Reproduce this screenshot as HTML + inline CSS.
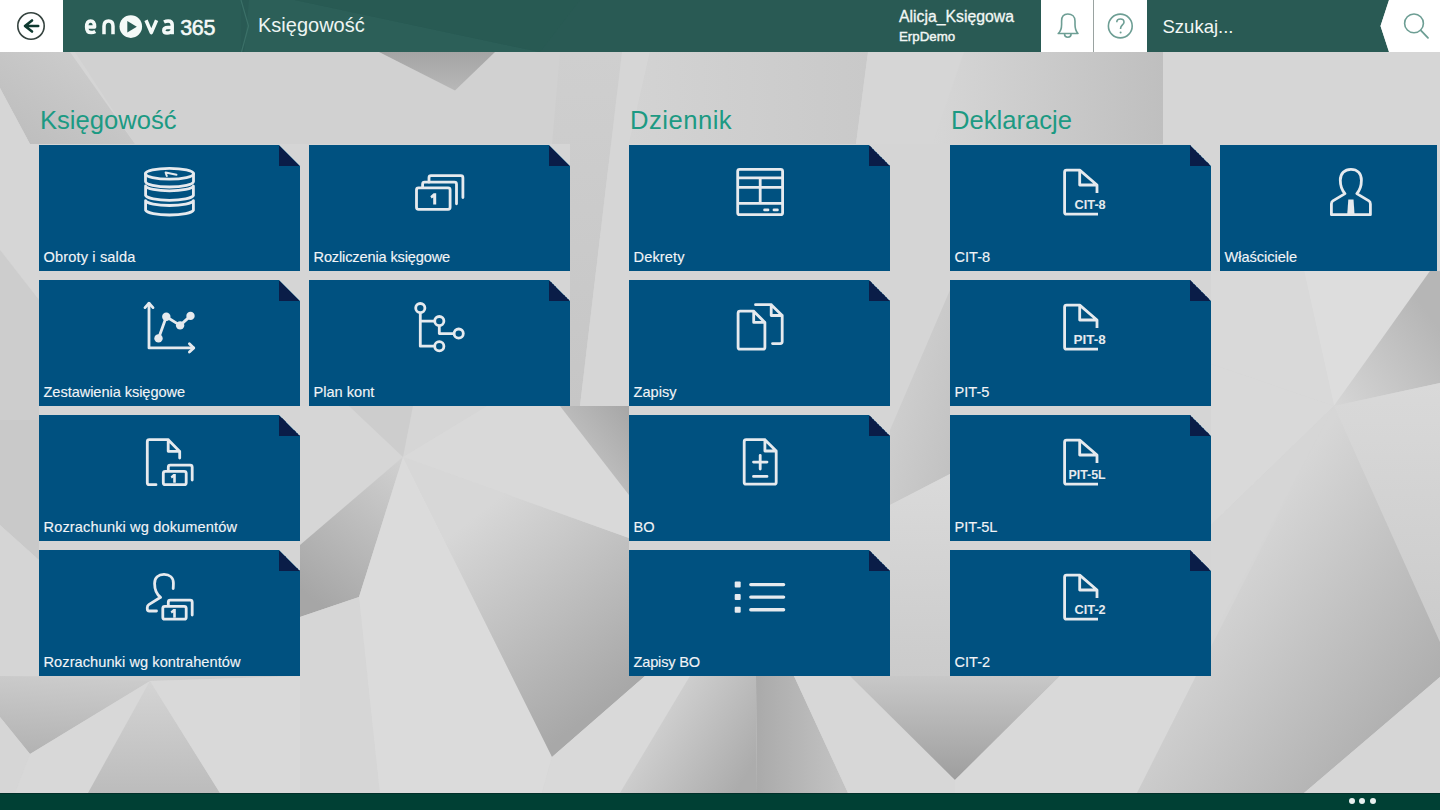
<!DOCTYPE html>
<html><head><meta charset="utf-8">
<style>
*{margin:0;padding:0;box-sizing:border-box}
html,body{width:1440px;height:810px;overflow:hidden}
body{position:relative;background:#d4d4d4;font-family:"Liberation Sans",sans-serif}
#bg{position:absolute;left:0;top:0;width:1440px;height:810px}
#hdr{position:absolute;left:0;top:0;width:1440px;height:52px}
.t{position:absolute;width:261px;height:126px;background:#005180;overflow:hidden;clip-path:polygon(0 0,calc(100% - 21px) 0,100% 21px,100% 100%,0 100%)}
.t.nf{clip-path:none}
.t:after{content:"";position:absolute;right:0;top:0;width:21px;height:21px;
 background:linear-gradient(45deg,#0a1d48 50%,transparent 50%)}
.t.nf:after{display:none}
.t .l{position:absolute;left:4.5px;top:104.3px;font-size:14.6px;color:#f2f4f7;white-space:nowrap;-webkit-text-stroke:0.12px #f2f4f7}
.t svg{position:absolute;left:0;top:0}
.h{position:absolute;top:105.5px;font-size:25.6px;color:#1c9a83;white-space:nowrap}
#ftr{position:absolute;left:0;top:793px;width:1440px;height:17px;background:#004034;border-top:1px solid #01302a}
.dot{position:absolute;top:798px;width:6px;height:6px;border-radius:50%;background:#e8f0ee}
</style></head><body>
<svg id="bg" width="1440" height="810" viewBox="0 0 1440 810">
<defs>
<linearGradient id="gT1" x1="0" y1="0" x2="0" y2="1"><stop offset="0" stop-color="#a4a4a4"/><stop offset="1" stop-color="#b8b8b8"/></linearGradient>
<linearGradient id="gTL" x1="0" y1="1" x2="1" y2="0"><stop offset="0" stop-color="#bcbcbc"/><stop offset="1" stop-color="#d0d0d0"/></linearGradient>
<linearGradient id="gK2" x1="0" y1="0" x2="1" y2="0"><stop offset="0" stop-color="#d6d6d6"/><stop offset="1" stop-color="#bfbfbf"/></linearGradient>
<linearGradient id="gA" gradientUnits="userSpaceOnUse" x1="400" y1="460" x2="300" y2="590"><stop offset="0" stop-color="#d0d0d0"/><stop offset="1" stop-color="#a6a6a6"/></linearGradient>
<linearGradient id="gB" gradientUnits="userSpaceOnUse" x1="470" y1="520" x2="610" y2="700"><stop offset="0" stop-color="#d7d7d7"/><stop offset="1" stop-color="#a8a8a8"/></linearGradient>
<linearGradient id="gD" x1="0" y1="1" x2="1" y2="0"><stop offset="0" stop-color="#d0d0d0"/><stop offset="1" stop-color="#a6a6a6"/></linearGradient>
<linearGradient id="gF1" x1="0.2" y1="0" x2="0.1" y2="1"><stop offset="0" stop-color="#cbcbcb"/><stop offset="1" stop-color="#b2b2b2"/></linearGradient>
<linearGradient id="gF4" x1="0" y1="0" x2="0" y2="1"><stop offset="0" stop-color="#d4d4d4"/><stop offset="1" stop-color="#bcbcbc"/></linearGradient>
<linearGradient id="gTri" x1="0" y1="0" x2="0" y2="1"><stop offset="0" stop-color="#c8c8c8"/><stop offset="1" stop-color="#9e9e9e"/></linearGradient>
<linearGradient id="gM1" gradientUnits="userSpaceOnUse" x1="660" y1="700" x2="756" y2="760"><stop offset="0" stop-color="#d2d2d2"/><stop offset="1" stop-color="#acacac"/></linearGradient>
<linearGradient id="gM2" gradientUnits="userSpaceOnUse" x1="756" y1="740" x2="840" y2="740"><stop offset="0" stop-color="#aaaaaa"/><stop offset="1" stop-color="#c2c2c2"/></linearGradient>
<linearGradient id="gR3" gradientUnits="userSpaceOnUse" x1="1334" y1="406" x2="1440" y2="330"><stop offset="0" stop-color="#d6d6d6"/><stop offset="1" stop-color="#b6b6b6"/></linearGradient>
<linearGradient id="gR7" gradientUnits="userSpaceOnUse" x1="1230" y1="560" x2="1420" y2="700"><stop offset="0" stop-color="#d6d6d6"/><stop offset="1" stop-color="#afafaf"/></linearGradient>
<linearGradient id="gR4" x1="0" y1="0" x2="0" y2="1"><stop offset="0" stop-color="#d9d9d9"/><stop offset="1" stop-color="#cbcbcb"/></linearGradient>
<linearGradient id="gG" x1="0" y1="0" x2="1" y2="1"><stop offset="0" stop-color="#d5d5d5"/><stop offset="1" stop-color="#b8b8b8"/></linearGradient>
<linearGradient id="gK" x1="0" y1="0" x2="1" y2="0"><stop offset="0" stop-color="#d2d2d2"/><stop offset="1" stop-color="#c2c2c2"/></linearGradient>
<linearGradient id="gGap" x1="0" y1="0" x2="0" y2="1"><stop offset="0" stop-color="#cfcfcf"/><stop offset="1" stop-color="#c6c6c6"/></linearGradient>
<linearGradient id="gTop2" x1="0" y1="0" x2="1" y2="0"><stop offset="0" stop-color="#d3d3d3"/><stop offset="1" stop-color="#c9c9c9"/></linearGradient>
<linearGradient id="gWedge" x1="0" y1="0" x2="1" y2="1"><stop offset="0" stop-color="#d4d4d4"/><stop offset="1" stop-color="#c0c0c0"/></linearGradient>
<linearGradient id="gGap2" x1="0" y1="0" x2="0" y2="1"><stop offset="0" stop-color="#dadada"/><stop offset="1" stop-color="#cbcbcb"/></linearGradient>
</defs>
<rect x="0" y="0" width="1440" height="810" fill="#d5d5d5"/>
<!-- top band -->
<polygon points="75,52 378,52 455,90 487,52 700,52 690,144 135,144" fill="#d1d1d1"/>
<polygon points="0,52 70,52 135,144 30,144 0,88" fill="url(#gTL)"/>
<polygon points="0,88 30,144 0,144" fill="#d6d6d6"/>
<polygon points="379,52 495,52 455,90.5" fill="url(#gT1)"/>
<polygon points="560,52 622,52 580,406 570,406 570,144 552,144" fill="url(#gGap)"/>
<polygon points="622,52 650,52 629,144 629,406 580,406" fill="#d6d6d6"/>
<polygon points="650,52 868,52 856,144 629,144" fill="url(#gTop2)"/>
<polygon points="868,52 964,52 933,144 856,144" fill="#d6d6d6"/>
<polygon points="964,52 1163,52 1163,144 933,144" fill="url(#gK2)"/>
<polygon points="1163,52 1440,52 1440,271 1163,271" fill="#d6d6d6"/>
<!-- left strip -->
<polygon points="0,144 39,144 39,300 0,250" fill="#d6d6d6"/>
<polygon points="0,250 39,300 39,420 0,420" fill="#cdcdcd"/>
<polygon points="0,420 39,420 39,560 0,525" fill="#c9c9c9"/>
<polygon points="0,525 39,560 39,676 0,676" fill="#d5d5d5"/>
<!-- bottom left -->
<polygon points="0,676 300,676 150,681 30,754 0,717" fill="#cdcdcd"/>
<polygon points="0,676 150,681 30,754 0,717" fill="url(#gF1)"/>
<polygon points="0,717 30,754 15,793 0,793" fill="#d6d6d6"/>
<polygon points="30,754 150,681 88,793 15,793" fill="#d8d8d8"/>
<polygon points="150,681 88,793 220,793" fill="url(#gF4)"/>
<polygon points="150,681 300,676 380,676 380,793 220,793" fill="#d9d9d9"/>
<!-- middle-left region with vertex V3 -->
<polygon points="300,406 487,406 403,457 300,545" fill="#d6d6d6"/>
<polygon points="349,406 413,406 403,457" fill="#cdcdcd"/>
<polygon points="403,457 300,545 300,617 359,597" fill="url(#gA)"/>
<polygon points="300,617 359,597 380,793 300,793" fill="#d6d6d6"/>
<polygon points="403,457 359,597 380,793 542,793 552,757" fill="#dbdbdb"/>
<polygon points="403,457 629,538 629,676 645,676 552,757" fill="url(#gB)"/>
<polygon points="403,457 487,406 560,406 629,495 629,538" fill="#d9d9d9"/>
<polygon points="560,406 629,406 629,495" fill="url(#gD)"/>
<!-- bottom middle -->
<polygon points="645,676 690,676 620,793 542,793 552,757" fill="#d9d9d9"/>
<polygon points="690,676 756,676 757,793 620,793" fill="url(#gM1)"/>
<polygon points="756,676 794,676 848,793 757,793" fill="url(#gM2)"/>
<polygon points="794,676 850,676 955,780 955,793 848,793" fill="#d7d7d7"/>
<polygon points="850,676 1060,676 955,780" fill="url(#gTri)"/>
<polygon points="1060,676 1196,676 1137,793 955,793 955,780" fill="#d9d9d9"/>
<!-- gap between Dziennik and Deklaracje -->
<polygon points="890,430 950,290 950,474 890,505" fill="url(#gWedge)"/>
<polygon points="890,505 950,474 950,676 890,676" fill="url(#gGap2)"/>
<!-- right column V2 -->
<polygon points="1211,271 1304,271 1334,406 1211,364" fill="#d9d9d9"/>
<polygon points="1304,271 1430,271 1334,406" fill="#dddddd"/>
<polygon points="1430,271 1440,271 1440,383 1334,406" fill="url(#gR3)"/>
<polygon points="1334,406 1440,383 1440,642" fill="url(#gR4)"/>
<polygon points="1334,406 1211,364 1211,525" fill="#d9d9d9"/>
<polygon points="1334,406 1211,525 1211,639" fill="#d6d6d6"/>
<polygon points="1334,406 1196,676 1137,793 1304,793 1440,677 1440,642" fill="url(#gR7)"/>
<polygon points="1304,793 1440,677 1440,793" fill="#d6d6d6"/>
</svg>

<div id="hdr">
<svg width="1440" height="52" viewBox="0 0 1440 52" style="position:absolute;left:0;top:0">
<rect x="0" y="0" width="63" height="52" fill="#ffffff"/>
<rect x="63" y="0" width="978" height="52" fill="#295a54"/>
<polygon points="63,0 241,0 241,52 63,52" fill="#2a5d56"/>
<polygon points="249,0 295,0 540,52 244,52" fill="#2c5f58"/>
<polygon points="295,0 580,0 540,52" fill="#285a53"/>
<polyline points="241,0 248.5,26 241.5,52" fill="none" stroke="#3b7068" stroke-width="1.2"/>
<rect x="1041" y="0" width="106" height="52" fill="#ffffff"/>
<rect x="1093" y="0" width="1" height="52" fill="#9aa3a1"/>
<polygon points="1147,0 1389,0 1380.5,26 1389,52 1147,52" fill="#295a54"/>
<rect x="1389" y="0" width="51" height="52" fill="#ffffff"/>
<polygon points="1389,0 1440,0 1440,52 1389,52 1380.5,26" fill="#ffffff"/>
<!-- back icon -->
<circle cx="31" cy="26" r="13.2" fill="none" stroke="#34423e" stroke-width="1.6"/>
<path d="M38.2 26 H25.5 M32 20.5 L25 26 L32 31.5" fill="none" stroke="#0e3a30" stroke-width="2.6" stroke-linecap="round" stroke-linejoin="round"/>
<!-- logo -->
<g fill="none" stroke="#f4faf8" stroke-width="3.5" stroke-linecap="butt" stroke-linejoin="round">
<path d="M87 26.9 H94.6 C94.6 23 92.9 20.9 90.6 20.9 C88 20.9 86.6 23.4 86.6 27 C86.6 30.6 88.3 32.6 91.2 32.6 C92.8 32.6 94 32.2 95.3 31.4"/>
<path d="M104 34.3 V26.2 C104 22.8 105.9 20.9 108.6 20.9 C111.3 20.9 113 22.8 113 26.2 V34.3"/>
<path d="M146 20.2 L151.3 32.6 L156.6 20.2"/>
<path d="M164 22 C165.3 21.3 166.6 20.9 168.2 20.9 C170.8 20.9 172.2 22.2 172.2 24.8 V34.3 M172.2 27.6 H167.9 C165.2 27.6 163.8 28.8 163.8 30.5 C163.8 32.2 165.1 33 167 33 C169.4 33 172.2 31.7 172.2 29.5"/>
</g>
<circle cx="130.8" cy="26.6" r="11.3" fill="#f4faf8"/>
<path d="M127.3 21 L136.8 26.8 L127.3 32.6 Z" fill="#2a5d56"/>
<text x="180.3" y="34.6" font-family="Liberation Sans" font-size="21.5" fill="#f4faf8" stroke="#f4faf8" stroke-width="0.55" letter-spacing="-0.4">365</text>
<!-- title -->
<text x="258" y="32.3" font-family="Liberation Sans" font-size="20" fill="#eef5f3">Księgowość</text>
<text x="899" y="21.5" font-family="Liberation Sans" font-size="15.8" fill="#f2f7f5" stroke="#f2f7f5" stroke-width="0.3">Alicja_Księgowa</text>
<text x="899" y="40.8" font-family="Liberation Sans" font-size="13.3" fill="#f2f7f5" stroke="#f2f7f5" stroke-width="0.4">ErpDemo</text>
<text x="1162.5" y="32.9" font-family="Liberation Sans" font-size="18.5" fill="#f2f7f5">Szukaj...</text>
<!-- bell -->
<path d="M1058.2 33.5 H1078 C1076 31.5 1075 29 1075 24.5 V21 C1075 16.8 1072 14 1067.8 14 C1063.6 14 1061.6 16.8 1061.6 21 V24.5 C1061.6 29 1060.6 31.5 1058.2 33.5 Z M1064.5 34 A3.3 3.3 0 0 0 1071.1 34" fill="none" stroke="#6d9e94" stroke-width="1.6" stroke-linejoin="round"/>
<!-- help -->
<circle cx="1120.3" cy="26" r="11.9" fill="none" stroke="#6d9e94" stroke-width="1.6"/>
<path d="M1116.8 22.2 C1116.8 20.2 1118.4 19 1120.4 19 C1122.5 19 1124 20.3 1124 22.2 C1124 24.6 1120.6 25.3 1120.6 28.2 V29" fill="none" stroke="#6d9e94" stroke-width="1.6"/>
<circle cx="1120.6" cy="32.4" r="1" fill="#6d9e94"/>
<!-- search -->
<circle cx="1414" cy="23.4" r="9.4" fill="none" stroke="#6d9e94" stroke-width="1.6"/>
<path d="M1420.8 30.4 L1428 37.8" fill="none" stroke="#6d9e94" stroke-width="1.8" stroke-linecap="round"/>
</svg>
</div>

<div class="h" style="left:40px">Księgowość</div>
<div class="h" style="left:630px;letter-spacing:0.5px">Dziennik</div>
<div class="h" style="left:951px">Deklaracje</div>

<div class="t" style="left:39px;top:145px"><div class="l" style="letter-spacing:0.14px">Obroty i salda</div></div>
<div class="t" style="left:309px;top:145px"><div class="l" style="letter-spacing:-0.15px">Rozliczenia księgowe</div></div>
<div class="t" style="left:39px;top:280px"><div class="l" style="letter-spacing:-0.06px">Zestawienia księgowe</div></div>
<div class="t" style="left:309px;top:280px"><div class="l">Plan kont</div></div>
<div class="t" style="left:39px;top:415px"><div class="l" style="letter-spacing:0.12px">Rozrachunki wg dokumentów</div></div>
<div class="t" style="left:39px;top:550px"><div class="l" style="letter-spacing:0.06px">Rozrachunki wg kontrahentów</div></div>

<div class="t" style="left:629px;top:145px"><div class="l" style="letter-spacing:0.13px">Dekrety</div></div>
<div class="t" style="left:629px;top:280px"><div class="l">Zapisy</div></div>
<div class="t" style="left:629px;top:415px"><div class="l">BO</div></div>
<div class="t" style="left:629px;top:550px"><div class="l" style="letter-spacing:-0.18px">Zapisy BO</div></div>

<div class="t" style="left:950px;top:145px"><div class="l">CIT-8</div></div>
<div class="t" style="left:950px;top:280px"><div class="l">PIT-5</div></div>
<div class="t" style="left:950px;top:415px"><div class="l">PIT-5L</div></div>
<div class="t" style="left:950px;top:550px"><div class="l">CIT-2</div></div>
<div class="t nf" style="left:1220px;top:145px;width:217px"><div class="l" style="letter-spacing:-0.03px">Właściciele</div></div>

<svg id="ic" width="1440" height="810" viewBox="0 0 1440 810" style="position:absolute;left:0;top:0;z-index:5">
<g fill="none" stroke="#e6eaee" stroke-width="2.8" stroke-linejoin="round" stroke-linecap="round">
<!-- coins -->
<ellipse cx="169.5" cy="173.7" rx="24" ry="5.4"/>
<path d="M145.5 173.7 V181.6 A24 5.4 0 0 0 193.5 181.6 V173.7"/>
<path d="M145.6 186 A24 5.4 0 0 0 193.4 186 V195.4 A24 5.4 0 0 1 145.6 195.4 Z"/>
<path d="M145.6 200.6 A24 5.4 0 0 0 193.4 200.6 V210.1 A24 5.4 0 0 1 145.6 210.1 Z"/>
<path d="M165.6 172.6 L166.8 176 M165.6 172.6 L176.5 174.8" stroke-width="2"/>
<!-- cards -->
<rect x="416.5" y="187.8" width="33.6" height="21.5" rx="2"/>
<path d="M422.6 187.5 V184.2 Q422.6 182.2 424.6 182.2 H454.5 Q456.5 182.2 456.5 184.2 V203.8"/>
<path d="M429 182 V177.7 Q429 175.7 431 175.7 H460.9 Q462.9 175.7 462.9 177.7 V197.6"/>
<!-- chart -->
<path d="M149 303.5 V347.9 H193.5"/>
<path d="M145 307.6 L149 303.3 L153 307.6 M189.4 343.8 L193.8 347.9 L189.4 352"/>
<path d="M158.5 338.4 L166.3 316.8 L180.1 325.4 L190.5 315.9"/>
<!-- tree -->
<circle cx="420.3" cy="308.1" r="4.6"/>
<circle cx="439.3" cy="321.1" r="4.6"/>
<circle cx="458.7" cy="333.6" r="4.6"/>
<circle cx="439.3" cy="346.2" r="4.6"/>
<path d="M420.3 312.7 V346.2 H434.7 M420.3 321.1 H434.7 M439.3 325.7 V333.6 H454.1" stroke-linecap="butt"/>
<!-- doc cards -->
<path d="M179.7 458 V451.5 L168.2 439.7 H149.3 Q147.3 439.7 147.3 441.7 V482.7 Q147.3 484.7 149.3 484.7 H156 M168.2 439.7 V451.3 H179.7"/>
<rect x="163.3" y="471.3" width="22.9" height="13.4" rx="2"/>
<path d="M168.3 470 V467.2 Q168.3 465.2 170.3 465.2 H190.2 Q192.2 465.2 192.2 467.2 V480"/>
<!-- person cards -->
<path d="M173.2 588.5 C173.3 587 173.4 585 173.4 583 C173.4 577.6 169.6 574.4 164 574.4 C158.4 574.4 154.6 577.6 154.6 583.5 C154.6 589.5 157 594.6 160.6 597.3 L148.8 604.6 Q147.3 605.6 147.3 607.6 V609 Q147.3 611 149.3 611 H156.5"/>
<rect x="162.8" y="606.3" width="23.4" height="12.9" rx="2"/>
<path d="M168.3 605 V602.2 Q168.3 600.2 170.3 600.2 H190.2 Q192.2 600.2 192.2 602.2 V615"/>
<!-- table -->
<rect x="737.7" y="169.3" width="44.9" height="45.4" rx="2"/>
<path d="M737.7 177.9 H782.6 M737.7 187.4 H782.6 M737.7 203.4 H782.6 M760.2 177.9 V203.4" stroke-linecap="butt"/>
<path d="M764.6 209.9 H768 M774 209.9 H777.4"/>
<!-- two docs -->
<path d="M738.1 313.2 Q738.1 311.2 740.1 311.2 H753.7 L764.9 322.4 V347.2 Q764.9 349.2 762.9 349.2 H740.1 Q738.1 349.2 738.1 347.2 Z M753.7 311.2 V322.4 H764.9"/>
<path d="M755.5 304.7 H771.2 L782.2 315.5 V341.6 Q782.2 343.6 780.2 343.6 H772.5 M771.2 304.7 V315.5 H782.2"/>
<!-- doc plus minus -->
<path d="M744.2 441.7 Q744.2 439.7 746.2 439.7 H764.9 L776.2 451 V482.2 Q776.2 484.2 774.2 484.2 H746.2 Q744.2 484.2 744.2 482.2 Z M764.9 439.7 V451 H776.2"/>
<path d="M753.5 462.1 H767 M760.2 455.3 V469 M753.5 476.4 H767"/>
<!-- list -->
<path d="M750.8 584.6 H783.6 M750.8 597.1 H783.6 M750.8 609.7 H783.6" stroke-width="3.4"/>
<!-- person -->
<path d="M1345 193.6 C1341.6 190 1340.3 185 1340.3 180.3 C1340.3 173.6 1344.5 169.3 1350.9 169.3 C1357.3 169.3 1361.4 173.6 1361.4 180.3 C1361.4 185 1360.2 190 1356.8 193.6 L1368.9 200.9 Q1370.4 201.9 1370.4 203.9 V214.7 H1331.4 V203.9 Q1331.4 201.9 1332.9 200.9 Z"/>
</g>
<g fill="#e6eaee">
<circle cx="158.5" cy="338.4" r="4.2"/>
<circle cx="166.3" cy="316.8" r="4.2"/>
<circle cx="180.1" cy="325.4" r="4.2"/>
<circle cx="190.5" cy="315.9" r="4.2"/>
<rect x="734.7" y="581.6" width="6" height="6" rx="1"/>
<rect x="734.7" y="594.1" width="6" height="6" rx="1"/>
<rect x="734.7" y="606.7" width="6" height="6" rx="1"/>
<path d="M1348.3 199.5 H1353.5 L1354.6 214.7 H1347.2 Z"/>
<path d="M430.3 196.3 L433.6 193.2 H436.2 V204.4 H433.2 V197.4 L431.6 198.6 Z"/>
<path d="M170.6 476.6 L173.4 474 H175.8 V482.8 H173.2 V477.6 L171.8 478.6 Z"/>
<path d="M170.6 611.6 L173.4 609 H175.8 V617.8 H173.2 V612.6 L171.8 613.6 Z"/>
</g>
<g transform="translate(0,0)"><path d="M1097 193 V185 L1079.7 170.1 H1066.6 Q1064.6 170.1 1064.6 172.1 V212.2 Q1064.6 214.2 1066.6 214.2 H1098 M1079.7 170.1 V185 H1097" fill="none" stroke="#e6eaee" stroke-width="2.8" stroke-linejoin="round"/>
<text x="1074.6" y="209.2" font-family="Liberation Sans" font-weight="bold" font-size="12.6" fill="#e6eaee" textLength="31.1" lengthAdjust="spacingAndGlyphs">CIT-8</text></g>
<g transform="translate(0,135)"><path d="M1097 193 V185 L1079.7 170.1 H1066.6 Q1064.6 170.1 1064.6 172.1 V212.2 Q1064.6 214.2 1066.6 214.2 H1098 M1079.7 170.1 V185 H1097" fill="none" stroke="#e6eaee" stroke-width="2.8" stroke-linejoin="round"/>
<text x="1073.5" y="209.2" font-family="Liberation Sans" font-weight="bold" font-size="12.6" fill="#e6eaee" textLength="32.2" lengthAdjust="spacingAndGlyphs">PIT-8</text></g>
<g transform="translate(0,270)"><path d="M1097 193 V185 L1079.7 170.1 H1066.6 Q1064.6 170.1 1064.6 172.1 V212.2 Q1064.6 214.2 1066.6 214.2 H1098 M1079.7 170.1 V185 H1097" fill="none" stroke="#e6eaee" stroke-width="2.8" stroke-linejoin="round"/>
<text x="1068.5" y="209.2" font-family="Liberation Sans" font-weight="bold" font-size="12.6" fill="#e6eaee" textLength="37.2" lengthAdjust="spacingAndGlyphs">PIT-5L</text></g>
<g transform="translate(0,405)"><path d="M1097 193 V185 L1079.7 170.1 H1066.6 Q1064.6 170.1 1064.6 172.1 V212.2 Q1064.6 214.2 1066.6 214.2 H1098 M1079.7 170.1 V185 H1097" fill="none" stroke="#e6eaee" stroke-width="2.8" stroke-linejoin="round"/>
<text x="1074.6" y="209.2" font-family="Liberation Sans" font-weight="bold" font-size="12.6" fill="#e6eaee" textLength="31.1" lengthAdjust="spacingAndGlyphs">CIT-2</text></g>
</svg>
<div id="ftr"></div>
<div class="dot" style="left:1349px"></div>
<div class="dot" style="left:1359px"></div>
<div class="dot" style="left:1370px"></div>
</body></html>
